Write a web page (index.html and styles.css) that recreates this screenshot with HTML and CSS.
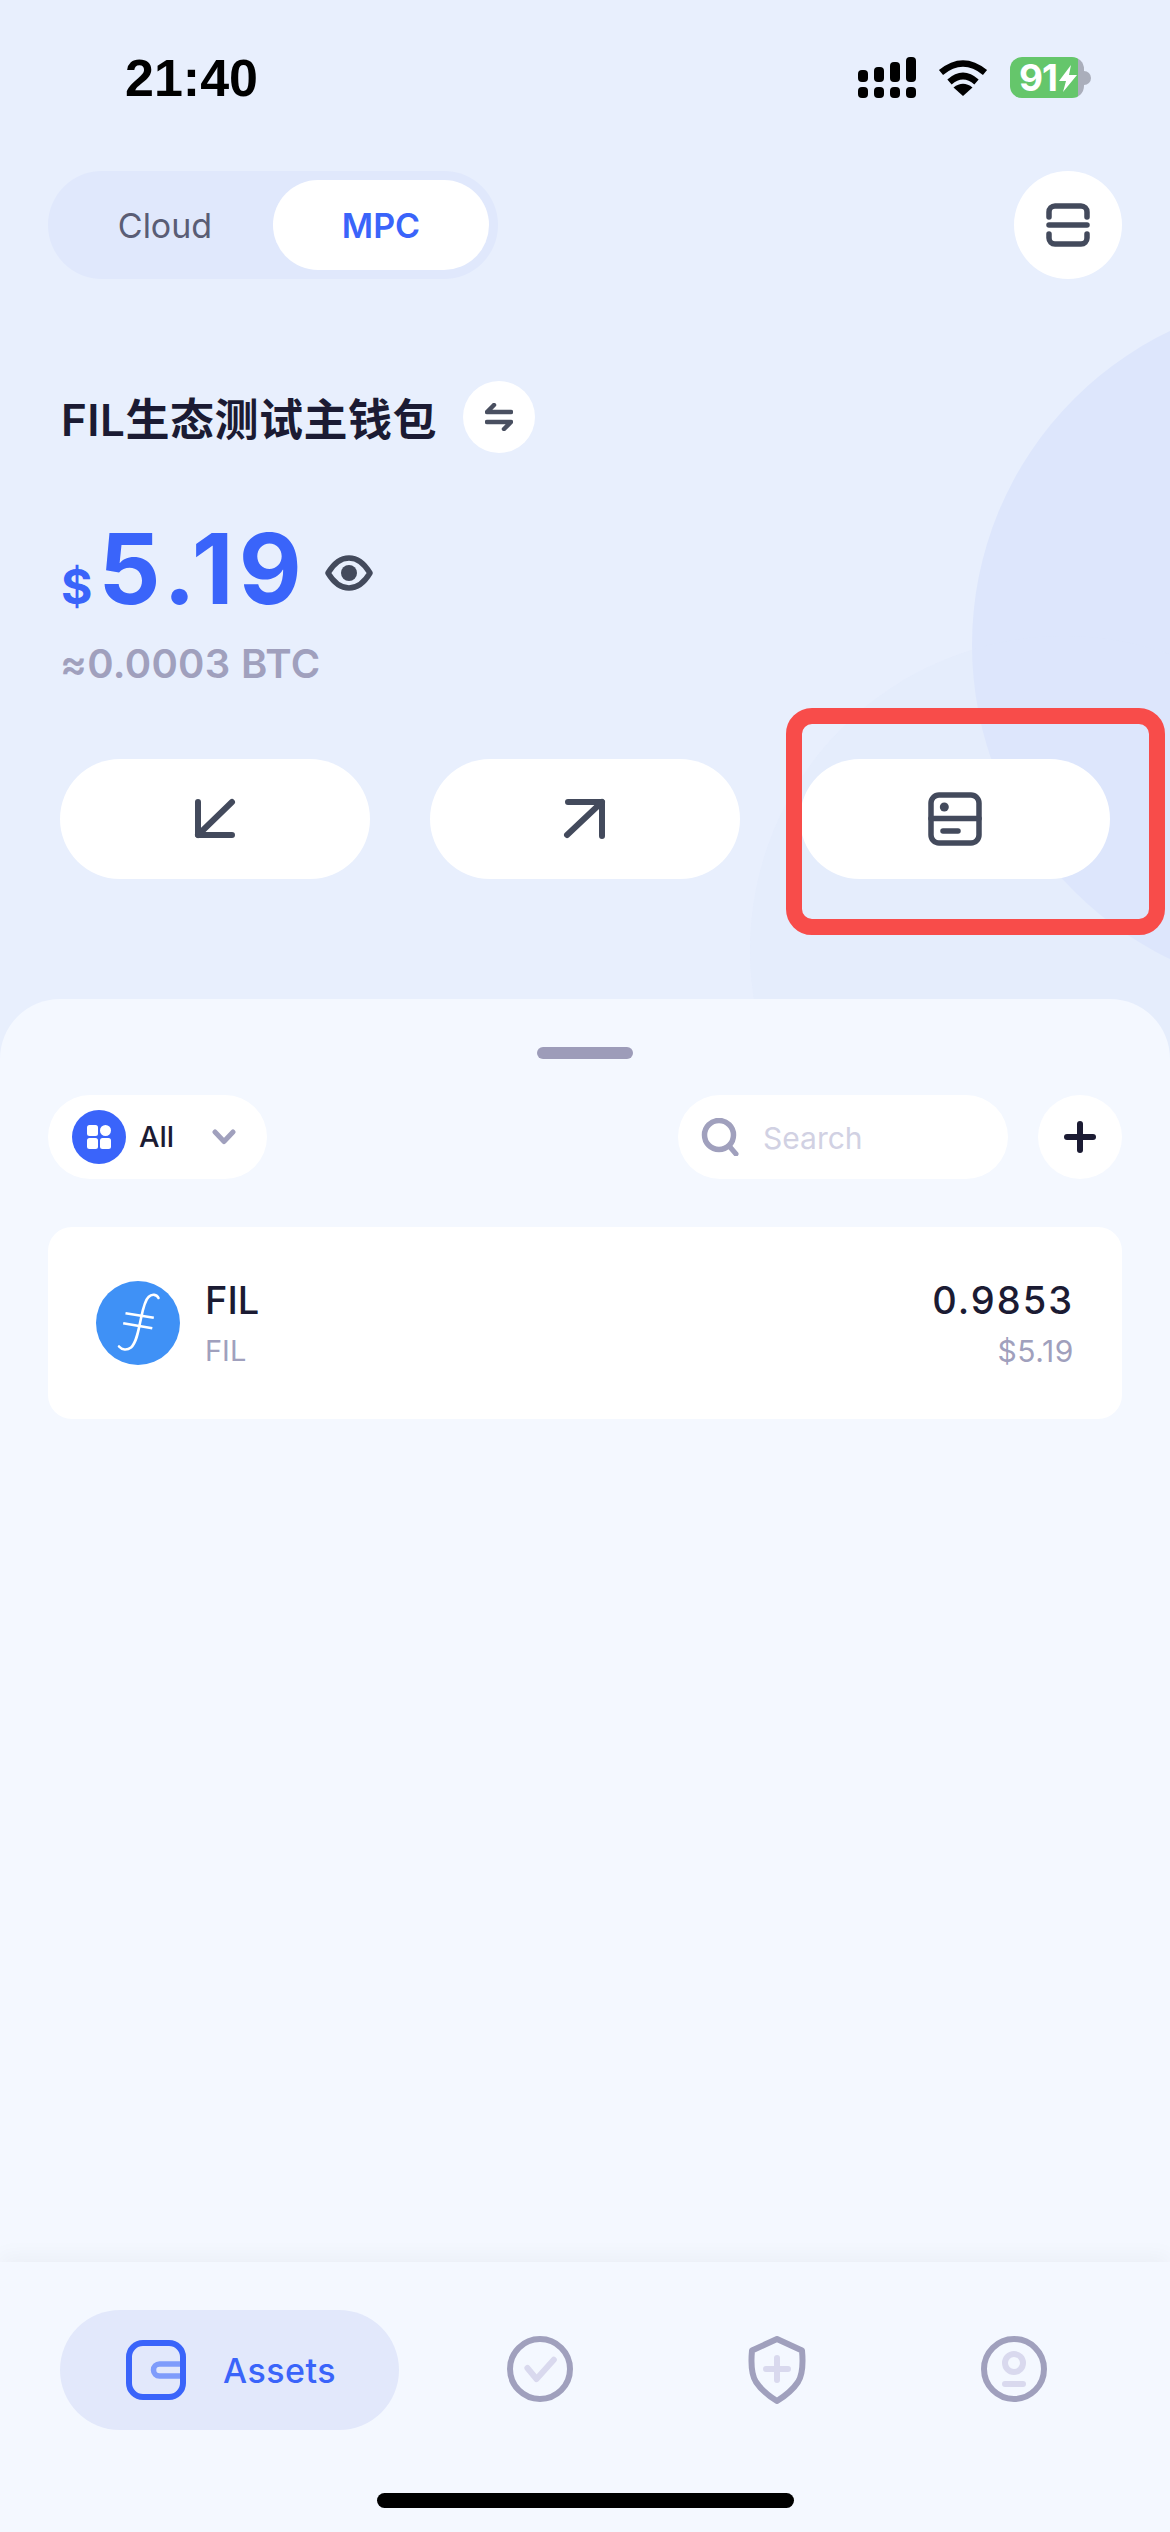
FILE: index.html
```html
<!DOCTYPE html>
<html lang="en">
<head>
  <meta charset="UTF-8">
  <meta name="viewport" content="width=device-width, initial-scale=1">
  <title>Wallet</title>
  <link rel="stylesheet" href="styles.css">
</head>
<body>
  <div class="screen">
    <div class="bg-circle bg-circle-big"></div>
    <div class="bg-circle bg-circle-small"></div>

    <div class="status-bar">
      <span class="time">21:40</span>
      <div class="status-icons">
        <svg width="58" height="41" viewBox="0 0 58 41" fill="#000">
          <rect x="0" y="13" width="10" height="12" rx="4"/>
          <rect x="16" y="10" width="10" height="15" rx="4"/>
          <rect x="32" y="5" width="10" height="20" rx="4"/>
          <rect x="48" y="0" width="10" height="25" rx="4"/>
          <rect x="0" y="30" width="10" height="11" rx="4"/>
          <rect x="16" y="30" width="10" height="11" rx="4"/>
          <rect x="32" y="30" width="10" height="11" rx="4"/>
          <rect x="48" y="30" width="10" height="11" rx="4"/>
        </svg>
        <svg width="50" height="37" viewBox="0 0 50 37">
          <path d="M3 13.5 Q25 -4.5 47 13.5" fill="none" stroke="#000" stroke-width="6.5"/>
          <path d="M11.5 23 Q25 11 38.5 23" fill="none" stroke="#000" stroke-width="6.5"/>
          <path d="M25 37 L15.5 28.5 Q25 21 34.5 28.5 Z" fill="#000"/>
        </svg>
        <div class="battery">
          <div class="battery-body">
            <span class="battery-level">91</span>
            <svg width="18" height="27" viewBox="0 0 18 27"><path d="M12 0 L0 16 H7 L4 27 L18 10 H10 Z" fill="#fff"/></svg>
          </div>
          <div class="battery-nub"></div>
        </div>
      </div>
    </div>

    <div class="mode-row">
      <div class="segment">
        <div class="segment-tab">Cloud</div>
        <div class="segment-tab active">MPC</div>
      </div>
      <div class="round-btn">
        <svg width="44" height="44" viewBox="0 0 44 44" fill="none" stroke="#434a5c" stroke-width="5.5" stroke-linecap="round">
          <path d="M3 14 V9 a6 6 0 0 1 6-6 H35 a6 6 0 0 1 6 6 V14"/>
          <path d="M3 22 H41"/>
          <path d="M3 31 V35 a6 6 0 0 0 6 6 H35 a6 6 0 0 0 6-6 V31"/>
        </svg>
      </div>
    </div>

    <div class="wallet-row">
      <h1 class="wallet-name">FIL生态测试主钱包</h1>
      <div class="swap-btn">
        <svg width="28" height="28" viewBox="0 0 28 28" fill="none" stroke="#494f60" stroke-width="4.5" stroke-linecap="round" stroke-linejoin="round">
          <path d="M26 9 H2 L9 2"/>
          <path d="M2 19 H26 L19 26"/>
        </svg>
      </div>
    </div>

    <div class="balance">
      <div class="amount"><span class="currency">$</span><span class="value">5.19</span></div>
      <svg class="eye" width="48" height="36" viewBox="0 0 48 36">
        <path d="M3 18 C9 8 16 3 24 3 C32 3 39 8 45 18 C39 28 32 33 24 33 C16 33 9 28 3 18 Z" fill="none" stroke="#434a5c" stroke-width="5.5" stroke-linejoin="round"/>
        <circle cx="24" cy="18" r="8" fill="#434a5c"/>
      </svg>
    </div>
    <p class="btc">≈0.0003 BTC</p>

    <div class="actions">
      <div class="action-btn">
        <svg width="44" height="44" viewBox="0 0 44 44" fill="none" stroke="#434a5c" stroke-width="6" stroke-linecap="round" stroke-linejoin="round">
          <path d="M5 5 V38 H39"/>
          <path d="M5 38 L39 5"/>
        </svg>
      </div>
      <div class="action-btn">
        <svg width="44" height="44" viewBox="0 0 44 44" fill="none" stroke="#434a5c" stroke-width="6" stroke-linecap="round" stroke-linejoin="round">
          <path d="M5 5 H39 V39"/>
          <path d="M39 5 L4 38"/>
        </svg>
      </div>
      <div class="action-btn">
        <svg width="54" height="54" viewBox="0 0 54 54" fill="none" stroke="#434a5c" stroke-width="5.5" stroke-linecap="round">
          <rect x="3" y="3" width="48" height="48" rx="8"/>
          <path d="M3 26.5 H51"/>
          <path d="M15 39 H30"/>
          <circle cx="16.3" cy="15" r="4.5" fill="#434a5c" stroke="none"/>
        </svg>
      </div>
    </div>

    <div class="highlight-box"></div>

    <div class="sheet">
      <div class="handle"></div>
      <div class="filter-row">
        <div class="filter-pill">
          <div class="filter-icon">
            <svg width="24" height="24" viewBox="0 0 24 24" fill="#fff">
              <rect x="0" y="0" width="11" height="11" rx="2.5"/>
              <circle cx="18.5" cy="5.5" r="5.5"/>
              <rect x="0" y="13" width="11" height="11" rx="2.5"/>
              <rect x="13" y="13" width="11" height="11" rx="2.5"/>
            </svg>
          </div>
          <span class="filter-label">All</span>
          <svg class="chevron" width="24" height="16" viewBox="0 0 24 16" fill="none" stroke="#a0a0bd" stroke-width="5" stroke-linecap="round" stroke-linejoin="round">
            <path d="M3 3 L12 12.5 L21 3"/>
          </svg>
        </div>
        <div class="search-box">
          <svg width="38" height="38" viewBox="0 0 38 38" fill="none" stroke="#a0a0bd" stroke-width="5.5" stroke-linecap="round">
            <circle cx="18" cy="17" r="14.5"/>
            <path d="M29 29 L35 36" stroke-width="5"/>
          </svg>
          <span class="search-text">Search</span>
        </div>
        <div class="add-btn">
          <svg width="32" height="32" viewBox="0 0 32 32" fill="none" stroke="#1b1b33" stroke-width="6" stroke-linecap="round">
            <path d="M16 3 V29"/>
            <path d="M3 16 H29"/>
          </svg>
        </div>
      </div>

      <div class="asset-card">
        <svg class="coin" width="84" height="84" viewBox="0 0 84 84">
          <circle cx="42" cy="42" r="42" fill="#3f91f6"/>
          <path d="M62.5 17 C61 13.5 56 12.5 52.5 16 C48 20 46 33 44 42 C42 52 40 62 35 66.5 C31 69.5 26 69 23 65.5" fill="none" stroke="#fff" stroke-width="2.6" stroke-linecap="round"/>
          <path d="M29.5 32.3 L57.8 36.7 M27.2 42.3 L56.3 47.3" fill="none" stroke="#fff" stroke-width="2.6"/>
        </svg>
        <div class="asset-info">
          <div class="asset-name">FIL</div>
          <div class="asset-sub">FIL</div>
        </div>
        <div class="asset-amount">
          <div class="asset-qty">0.9853</div>
          <div class="asset-sub asset-value">$5.19</div>
        </div>
      </div>
    </div>

    <div class="bottom-nav">
      <div class="tabs">
        <div class="tab-active">
          <svg width="60" height="60" viewBox="0 0 60 60" fill="none">
            <path d="M54 24 H33.5 a6 6 0 0 0 0 12 H54" stroke="#7f9cfb" stroke-width="5.5"/>
            <rect x="3" y="3" width="54" height="54" rx="14" stroke="#3a64fa" stroke-width="6"/>
          </svg>
          <span class="tab-label">Assets</span>
        </div>
        <div class="tab-rest">
          <div class="tab-slot">
            <svg width="66" height="66" viewBox="0 0 66 66" fill="none" stroke-width="6" stroke-linecap="round" stroke-linejoin="round">
              <circle cx="33" cy="33" r="30" stroke="#a0a0bd"/>
              <path d="M20.4 32 L29.5 43 L46.8 23.7" stroke="#d9d9ee"/>
            </svg>
          </div>
          <div class="tab-slot">
            <svg width="60" height="68" viewBox="0 0 60 68" fill="none" stroke-width="6" stroke-linecap="round" stroke-linejoin="round">
              <path d="M30 3 L55 14.5 C56 25 56 38 51 46 C47 52 38 60 30 65 C22 60 13 52 9 46 C4 38 4 25 5 14.5 Z" stroke="#a0a0bd"/>
              <path d="M30 22 V44 M19 33 H41" stroke="#d9d9ee"/>
            </svg>
          </div>
          <div class="tab-slot">
            <svg width="66" height="66" viewBox="0 0 66 66" fill="none" stroke-width="6" stroke-linecap="round">
              <circle cx="33" cy="33" r="30" stroke="#a0a0bd"/>
              <circle cx="33" cy="27" r="9" stroke="#d9d9ee"/>
              <path d="M24 48 H42" stroke="#d9d9ee"/>
            </svg>
          </div>
        </div>
      </div>
      <div class="home-bar"></div>
    </div>
  </div>
</body>
</html>
```

FILE: styles.css
```css
* {
  box-sizing: border-box;
}

body {
  margin: 0;
  font-family: Inter, "Noto Sans CJK SC", sans-serif;
  color: #1b1b33;
}

.screen {
  position: relative;
  display: flex;
  flex-direction: column;
  width: 1170px;
  height: 2532px;
  overflow: hidden;
  background: #e8effd;
}

.bg-circle {
  position: absolute;
  border-radius: 50%;
}

.bg-circle-big {
  left: 972px;
  top: 297px;
  width: 696px;
  height: 696px;
  background: #dde6fc;
}

.bg-circle-small {
  left: 750px;
  top: 636px;
  width: 628px;
  height: 628px;
  background: rgba(222, 232, 252, 0.3);
}

.status-bar {
  position: relative;
  display: flex;
  justify-content: space-between;
  align-items: flex-start;
  height: 171px;
  padding: 52px 79px 0 125px;
}

.time {
  font-family: "Liberation Sans", sans-serif;
  font-size: 52px;
  font-weight: 700;
  line-height: 52px;
  color: #000;
}

.status-icons {
  display: flex;
  align-items: flex-start;
  gap: 22px;
  margin-top: 5px;
}

.status-icons svg:nth-child(2) {
  margin-top: 2px;
}

.battery {
  display: flex;
  align-items: center;
}

.battery-body {
  display: flex;
  align-items: center;
  width: 74px;
  height: 41px;
  padding-left: 9px;
  border-radius: 12px;
  background: linear-gradient(90deg, #65c66b 92%, #aaaebb 92%);
}

.battery-level {
  font-size: 37px;
  font-weight: 700;
  line-height: 41px;
  letter-spacing: -1px;
  color: #fff;
}

.battery-body svg {
  margin-left: 2px;
}

.battery-nub {
  width: 7px;
  height: 14px;
  border-radius: 0 7px 7px 0;
  background: #aaaebb;
}

.mode-row {
  position: relative;
  display: flex;
  justify-content: space-between;
  height: 108px;
  padding: 0 48px;
}

.segment {
  display: flex;
  width: 450px;
  padding: 9px;
  border-radius: 54px;
  background: #e0e8fc;
}

.segment-tab {
  flex: 1;
  display: flex;
  align-items: center;
  justify-content: center;
  border-radius: 45px;
  font-size: 34px;
  color: #5a5d75;
}

.segment-tab.active {
  background: #fff;
  font-weight: 600;
  color: #3a64fa;
}

.round-btn {
  display: flex;
  align-items: center;
  justify-content: center;
  width: 108px;
  height: 108px;
  border-radius: 50%;
  background: #fff;
}

.wallet-row {
  position: relative;
  display: flex;
  align-items: center;
  gap: 26px;
  margin-top: 102px;
  padding-left: 61px;
}

.wallet-name {
  margin: 0;
  padding-top: 6px;
  font-size: 44px;
  font-weight: 600;
  line-height: 60px;
  letter-spacing: 0.5px;
}

.swap-btn {
  display: flex;
  align-items: center;
  justify-content: center;
  width: 72px;
  height: 72px;
  border-radius: 50%;
  background: #fff;
}

.balance {
  position: relative;
  display: flex;
  align-items: center;
  gap: 18px;
  margin-top: 68px;
  padding-left: 61px;
}

.amount {
  display: flex;
  align-items: baseline;
  gap: 6px;
  color: #3a64fa;
  font-weight: 700;
}

.currency {
  font-size: 48px;
  line-height: 48px;
}

.value {
  font-size: 97px;
  line-height: 96px;
  letter-spacing: 5px;
}

.eye {
  margin-top: 8px;
}

.btc {
  position: relative;
  margin: 27px 0 0;
  padding-left: 60px;
  font-size: 40px;
  font-weight: 600;
  line-height: 40px;
  letter-spacing: 0.3px;
  color: #a0a0bd;
}

.actions {
  position: relative;
  display: flex;
  gap: 60px;
  margin-top: 75px;
  padding: 0 60px;
}

.action-btn {
  flex: 1;
  display: flex;
  align-items: center;
  justify-content: center;
  height: 120px;
  border-radius: 60px;
  background: #fff;
}

.highlight-box {
  position: absolute;
  left: 786px;
  top: 708px;
  width: 379px;
  height: 227px;
  border: 16px solid #f84c4a;
  border-radius: 26px;
}

.sheet {
  position: relative;
  flex: 1;
  margin-top: 120px;
  padding: 48px 48px 0;
  border-radius: 60px 60px 0 0;
  background: #f4f8ff;
}

.handle {
  width: 96px;
  height: 12px;
  margin: 0 auto 36px;
  border-radius: 6px;
  background: #9d9cb9;
}

.filter-row {
  display: flex;
  align-items: center;
}

.filter-pill {
  display: flex;
  align-items: center;
  width: 219px;
  height: 84px;
  padding-left: 24px;
  border-radius: 42px;
  background: #fff;
}

.filter-icon {
  display: flex;
  align-items: center;
  justify-content: center;
  width: 54px;
  height: 54px;
  border-radius: 50%;
  background: #3a64fa;
}

.filter-label {
  margin-left: 13px;
  margin-bottom: 2px;
  font-size: 29px;
  font-weight: 500;
}

.chevron {
  margin-left: 38px;
}

.search-box {
  display: flex;
  align-items: center;
  gap: 24px;
  width: 330px;
  height: 84px;
  margin-left: auto;
  padding-left: 23px;
  border-radius: 42px;
  background: #fff;
}

.search-text {
  margin-top: 2px;
  font-size: 30px;
  color: #d1d1e3;
}

.add-btn {
  display: flex;
  align-items: center;
  justify-content: center;
  width: 84px;
  height: 84px;
  margin-left: 30px;
  border-radius: 50%;
  background: #fff;
}

.asset-card {
  display: flex;
  align-items: center;
  height: 192px;
  margin-top: 48px;
  padding: 0 48px;
  border-radius: 24px;
  background: #fff;
}

.asset-info {
  margin-left: 25px;
}

.asset-amount {
  margin-left: auto;
  text-align: right;
}

.asset-name {
  margin-bottom: 11px;
  font-size: 38px;
  font-weight: 500;
  line-height: 44px;
}

.asset-qty {
  margin-bottom: 11px;
  font-size: 38px;
  font-weight: 500;
  line-height: 44px;
  letter-spacing: 2px;
}

.asset-sub {
  font-size: 29px;
  line-height: 36px;
  color: #a0a0bd;
}

.asset-value {
  font-size: 30px;
  letter-spacing: 0.6px;
}

.bottom-nav {
  position: relative;
  height: 270px;
  padding-top: 48px;
  background: #f4f8ff;
  box-shadow: 0 -6px 20px rgba(0, 0, 0, 0.04);
}

.tabs {
  display: flex;
  align-items: center;
  height: 120px;
  padding-left: 60px;
}

.tab-active {
  display: flex;
  align-items: center;
  gap: 37px;
  width: 339px;
  height: 120px;
  padding-left: 66px;
  border-radius: 60px;
  background: #e2e8fb;
}

.tab-label {
  font-size: 34px;
  font-weight: 500;
  letter-spacing: 0.5px;
  color: #3a64fa;
}

.tab-rest {
  display: flex;
  margin-left: 22.5px;
}

.tab-slot {
  display: flex;
  justify-content: center;
  width: 237px;
}

.home-bar {
  width: 417px;
  height: 15px;
  margin: 63px auto 0;
  border-radius: 8px;
  background: #000;
}
```
